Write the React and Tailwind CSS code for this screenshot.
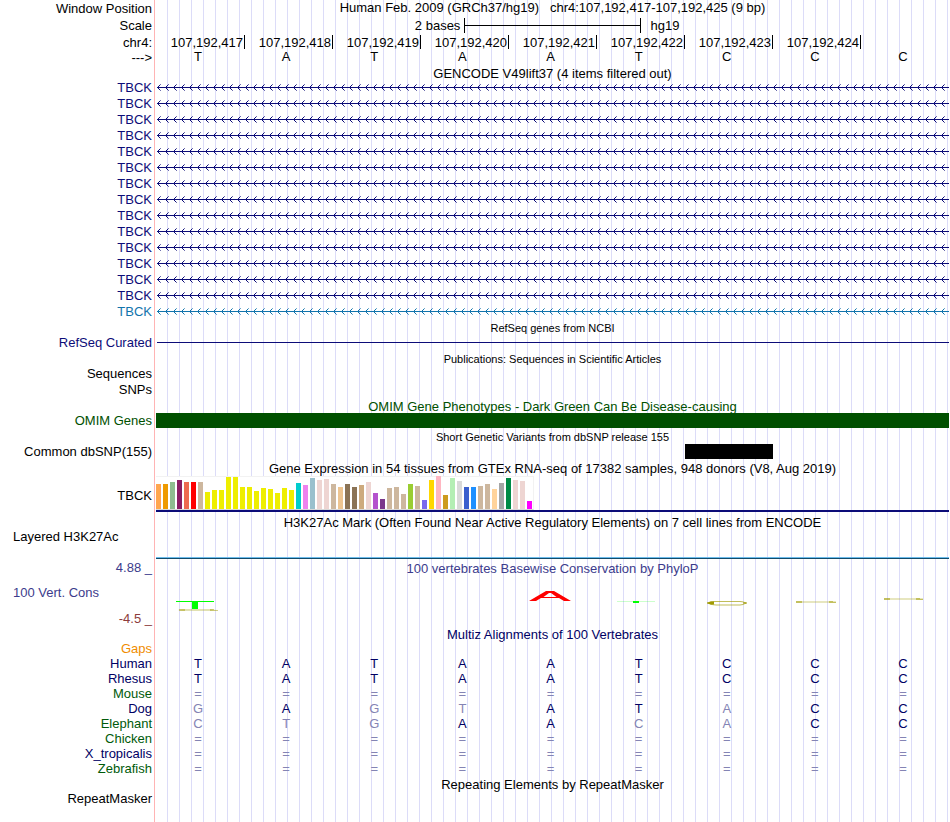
import React, { useId } from "react";
import clsx from "clsx";

const START = 107192417;
const REFERENCE = "TATAATCCC";

const GENES = [...Array(14).fill("text-[#0c0c78]"), "text-[#1174ac]"];

// [colour, bar height] per tissue
const TISSUES = [
  ["#ffa54f", 25], ["#ee9a00", 25], ["#8fbc8f", 27], ["#8b1c62", 29], ["#ee6a50", 27], ["#ff0000", 27],
  ["#cdb79e", 27], ["#eeee00", 17], ["#eeee00", 19], ["#eeee00", 19], ["#eeee00", 32], ["#eeee00", 32],
  ["#eeee00", 22], ["#eeee00", 22], ["#eeee00", 18], ["#eeee00", 21], ["#eeee00", 20], ["#eeee00", 16],
  ["#eeee00", 21], ["#eeee00", 19], ["#00cdcd", 26], ["#ee82ee", 24], ["#9ac0cd", 31], ["#eed5d2", 29],
  ["#eed5d2", 30], ["#cdb79e", 25], ["#eec591", 22], ["#8b7355", 25], ["#8b7355", 22], ["#cdaa7d", 24],
  ["#eed5d2", 27], ["#b452cd", 16], ["#7a378b", 10], ["#cdb79e", 21], ["#cdb79e", 22], ["#cdb79e", 15],
  ["#9acd32", 25], ["#cdb79e", 23], ["#7a67ee", 9], ["#ffd700", 29], ["#ffb6c1", 33], ["#cd9b1d", 14],
  ["#b4eeb4", 31], ["#d9d9d9", 28], ["#3a5fcd", 22], ["#1e90ff", 22], ["#cdb79e", 23], ["#cdb79e", 25],
  ["#ffd39b", 20], ["#a6a6a6", 26], ["#008b45", 31], ["#eed5d2", 29], ["#eed5d2", 28], ["#ff00ff", 8],
];

const SPECIES = [
  { name: "Human", bases: "TATAATCCC", color: "text-[#000064]" },
  { name: "Rhesus", bases: "TATAATCCC", color: "text-[#000064]" },
  { name: "Mouse", bases: "=========", color: "text-[#005a0a]" },
  { name: "Dog", bases: "GAGTATACC", color: "text-[#000064]" },
  { name: "Elephant", bases: "CTGAACACC", color: "text-[#005a0a]" },
  { name: "Chicken", bases: "=========", color: "text-[#005a0a]" },
  { name: "X_tropicalis", bases: "=========", color: "text-[#000064]" },
  { name: "Zebrafish", bases: "=========", color: "text-[#005a0a]" },
];

const Row = ({ label, labelClass, height, align = "items-center", children }) => (
  <div className={clsx("flex", height)}>
    <div className={clsx("mr-px flex w-[155px] shrink-0 justify-end border-r border-[#ffb4b4] pr-0.5 whitespace-nowrap", align, labelClass)}>
      {label}
    </div>
    <div className={clsx("flex min-w-0 flex-1 bg-[repeating-linear-gradient(to_right,transparent_0px_11px,#dcdcf8_11px_12px)]", align)}>
      {children}
    </div>
  </div>
);

const Title = ({ className, children }) => (
  <h2 className={clsx("w-full text-center whitespace-nowrap", className)}>{children}</h2>
);

const Bases = ({ bases, className }) => (
  <div className={clsx("grid w-full grid-cols-9 text-center", className)}>
    {bases.split("").map((base, i) => (
      <span key={i} className={clsx("pr-1", !className && (base === REFERENCE[i] ? "text-[#000064]" : "text-[#8484b4]"))}>
        {base}
      </span>
    ))}
  </div>
);

const Intron = () => {
  const id = useId();
  return (
    <svg className="h-4 w-full" shapeRendering="crispEdges" aria-hidden="true">
      <defs>
        <pattern id={id} width="8" height="16" patternUnits="userSpaceOnUse">
          <path d="M1 7h1v1h-1z M2 6h1v1h-1z M2 8h1v1h-1z M3 5h1v1h-1z M3 9h1v1h-1z" fill="currentColor" />
          <path d="M4 4h1v1h-1z M4 10h1v1h-1z" fill="currentColor" opacity=".6" />
        </pattern>
      </defs>
      <rect x="1" y="7" width="100%" height="1" fill="currentColor" />
      <rect width="100%" height="16" fill={`url(#${id})`} />
    </svg>
  );
};

const Expression = () => (
  <div className="w-full self-stretch">
    <div className="flex h-[34px] w-fit items-end gap-0.5 border-t border-r border-b border-t-[#f2f2f2] border-r-[#f2f2f2] border-b-[#d8d8d8] bg-white pr-px">
      {TISSUES.map(([color, height], i) => (
        <div key={i} className="w-[5px]" style={{ height, backgroundColor: color }} />
      ))}
    </div>
    <div className="h-0.5 bg-[#0c0c78]" />
  </div>
);

const Conservation = () => (
  <svg className="h-[50px] w-full" viewBox="0 0 793 50" preserveAspectRatio="none" aria-label="PhyloP scores">
    <path d="M20 24h38v1h-38z M36 25h6v7h-6z" fill="#00ff00" />
    <path d="M22 33q2 -1 6 -1h26q3 0 4 .7l4 .3l-4 .6q-2 .4 -4 .4h-26q-4 0 -6 -1z" fill="#a09a00" opacity=".3" />
    <path d="M23 32h6v2h-6z M54 32h4v1h4v1h-8z" fill="#a09a00" opacity=".45" />
    <path d="M373 24L390 14H398L415 24H408L403 21H385L380 24Z M387.5 20H400.5L395 16H393Z" fill="#ff0000" fillRule="evenodd" />
    <path d="M461 24h38v1h-38z" fill="#00ff00" opacity=".2" />
    <path d="M477 24h6v2h-6z" fill="#00ff00" />
    <path d="M590 26q-3 -1.5 -6 -1.5h-24q-7 0 -7 1.5t7 2h24q3 0 6 -2" fill="none" stroke="#a09a00" strokeOpacity=".65" />
    <path d="M551 25.5l4 -1h3v3h-3l-4 -1z M587 25.5h4v1h-4z" fill="#a09a00" />
    <path d="M640 24h40v2h-40z" fill="#a09a00" opacity=".25" />
    <path d="M640 24h6v2h-6z M673 24h4v1h3v1h-7z" fill="#a09a00" opacity=".5" />
    <path d="M728 21h39v2h-39z" fill="#a09a00" opacity=".25" />
    <path d="M728 21h6v2h-6z M760 21h4v1h3v1h-7z" fill="#a09a00" opacity=".5" />
  </svg>
);

const App = () => (
  <main className="flex min-h-screen flex-col bg-white pr-px font-['Liberation_Sans',Arial,sans-serif] text-[13px] leading-4 text-black">
    <Row label="Window Position" height="h-[17px]">
      <Title className="pb-0.5 whitespace-pre">{"Human Feb. 2009 (GRCh37/hg19)   chr4:107,192,417-107,192,425 (9 bp)"}</Title>
    </Row>
    <Row label="Scale" height="h-[17px]">
      <div className="grid w-full grid-cols-[7fr_4fr_7fr]">
        <span className="pr-1 text-right">2 bases</span>
        <div className="flex h-[15px] items-center border-x border-black">
          <div className="h-px w-full bg-black" />
        </div>
        <span className="pl-2.5">hg19</span>
      </div>
    </Row>
    <Row label="chr4:" labelClass="pt-0.5" height="h-[15px]">
      <div className="ml-px grid w-full grid-cols-9">
        {Array.from({ length: 8 }, (_, i) => (
          <div key={i} className="flex h-3.5 items-center justify-end border-r border-black pt-0.5 pr-px">
            {(START + i).toLocaleString("en-US")}
          </div>
        ))}
      </div>
    </Row>
    <Row label="--->" height="h-[17px]">
      <Bases bases={REFERENCE} className="pb-0.5 text-black" />
    </Row>
    <Row height="h-[14px]">
      <Title className="pt-0.5">GENCODE V49lift37 (4 items filtered out)</Title>
    </Row>
    {GENES.map((color, i) => (
      <div key={i} className={color}>
        <Row label="TBCK" height="h-4">
          <Intron />
        </Row>
      </div>
    ))}

    <Row height="h-[15px]">
      <Title className="text-[11px]">RefSeq genes from NCBI</Title>
    </Row>
    <Row label="RefSeq Curated" labelClass="text-[#0c0c78]" height="h-[15px]">
      <div className="ml-px h-px w-full bg-[#0c0c78]" />
    </Row>
    <Row height="h-4">
      <Title className="pt-0.5 text-[11px]">Publications: Sequences in Scientific Articles</Title>
    </Row>
    <Row label="Sequences" height="h-4" />
    <Row label="SNPs" height="h-4" />
    <Row height="h-[15px]">
      <Title className="pt-0.5 text-[#005000]">OMIM Gene Phenotypes - Dark Green Can Be Disease-causing</Title>
    </Row>
    <Row label="OMIM Genes" labelClass="text-[#005000]" height="h-[15px]">
      <div className="h-[15px] w-full bg-[#005000]" />
    </Row>
    <Row height="h-4">
      <Title className="pt-0.5 text-[11px]">Short Genetic Variants from dbSNP release 155</Title>
    </Row>
    <Row label="Common dbSNP(155)" height="h-[15px]">
      <div className="grid w-full grid-cols-9">
        <div className="col-start-7 h-[15px] bg-black" />
      </div>
    </Row>

    <Row height="h-[17px]">
      <Title className="pt-0.5">
        Gene Expression in 54 tissues from GTEx RNA-seq of 17382 samples, 948 donors (V8, Aug 2019)
      </Title>
    </Row>
    <Row label="TBCK" labelClass="pt-1" height="h-9">
      <Expression />
    </Row>
    <Row height="h-[19px]" align="items-end">
      <Title>H3K27Ac Mark (Often Found Near Active Regulatory Elements) on 7 cell lines from ENCODE</Title>
    </Row>
    <div className="flex h-[28px]">
      <div className="mr-px w-[155px] shrink-0 border-r border-[#ffb4b4] pl-[13px] leading-3">Layered H3K27Ac</div>
      <div className="flex flex-1 items-end bg-[repeating-linear-gradient(to_right,transparent_0px_11px,#dcdcf8_11px_12px)]">
        <div className="h-0.5 w-full border-t border-[#6cbcec] bg-[#104c6c]" />
      </div>
    </div>

    <Row label="4.88 _" labelClass="text-[#3c3c8c]" height="h-[18px]">
      <Title className="pt-0.5 text-[#3c3c8c]">100 vertebrates Basewise Conservation by PhyloP</Title>
    </Row>
    <div className="flex h-[50px]">
      <div className="mr-px flex w-[155px] shrink-0 flex-col justify-between border-r border-[#ffb4b4] pt-2 pr-0.5 pl-[13px]">
        <span className="text-[#3c3c8c]">100 Vert. Cons</span>
        <span className="text-right text-[#8c3c3c]">-4.5 _</span>
      </div>
      <div className="flex-1 bg-[repeating-linear-gradient(to_right,transparent_0px_11px,#dcdcf8_11px_12px)]">
        <Conservation />
      </div>
    </div>

    <Row height="h-[14px]">
      <Title className="pt-0.5 text-[#000064]">Multiz Alignments of 100 Vertebrates</Title>
    </Row>
    <Row label="Gaps" labelClass="text-[#f08c00]" height="h-[15px]" />
    {SPECIES.map((species) => (
      <Row key={species.name} label={species.name} labelClass={species.color} height="h-[15px]">
        <Bases bases={species.bases} />
      </Row>
    ))}
    <Row height="h-[15px]">
      <Title className="pt-0.5">Repeating Elements by RepeatMasker</Title>
    </Row>
    <Row label="RepeatMasker" height="flex-1" align="items-start" />
  </main>
);

export default App;
